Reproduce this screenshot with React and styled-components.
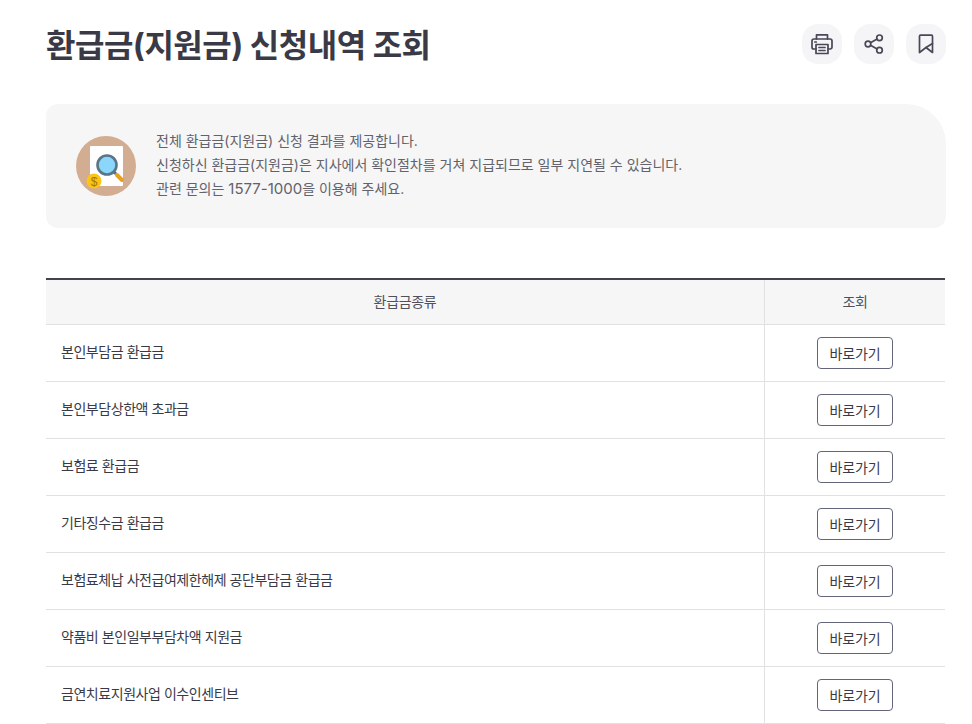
import React from 'react';
import styled, { createGlobalStyle } from 'styled-components';

const Global = createGlobalStyle`
  html, body { margin: 0; padding: 0; background: #fff; height: 724px; overflow: hidden; }
  body { font-family: Inter, "Noto Sans CJK KR", "Noto Sans", sans-serif; color: #33333d; }
`;
const Page = styled.main`
  padding: 0 26px 0 46px;
  width: 900px;
`;
const Header = styled.header`
  display: flex;
  justify-content: space-between;
  align-items: center;
  height: 88px;
  margin-bottom: 16px;
`;
const Title = styled.h1`
  margin: 0;
  padding-top: 4px;
  font-size: 32px;
  font-weight: 700;
  letter-spacing: -0.5px;
  line-height: 48px;
  color: #3a3a47;
`;
const Tools = styled.div`
  display: flex;
  gap: 12px;
`;
const ToolButton = styled.button`
  width: 40px;
  height: 40px;
  padding: 0;
  border: 0;
  border-radius: 16px;
  background: #f5f5f7;
  display: flex;
  align-items: center;
  justify-content: center;
  svg { display: block; }
`;
const Notice = styled.section`
  display: flex;
  align-items: center;
  gap: 20px;
  height: 124px;
  box-sizing: border-box;
  padding: 0 30px;
  background: #f6f6f6;
  border-radius: 12px 40px 12px 12px;
  margin-bottom: 50px;
`;
const NoticeText = styled.div`
  padding-bottom: 2px;
  font-size: 14px;
  line-height: 24px;
  color: #62626c;
  p { margin: 0; }
`;
const Digits = styled.span`
  font-size: 15px;
`;
const Table = styled.div`
  width: 899px;
  border-top: 2px solid #43434f;
`;
const Row = styled.div`
  display: grid;
  grid-template-columns: 718px 181px;
  height: 57px;
  border-bottom: 1px solid #e1e1e3;
  box-sizing: border-box;
`;
const HeadRow = styled(Row)`
  height: 45px;
  background: #f6f6f6;
`;
const HeadCell = styled.div`
  display: flex;
  align-items: center;
  justify-content: center;
  padding-bottom: 2px;
  font-size: 14px;
  letter-spacing: -0.3px;
  color: #50505c;
  & + & { border-left: 1px solid #e1e1e3; }
`;
const NameCell = styled.div`
  display: flex;
  align-items: center;
  padding: 0 0 4px 15px;
  font-size: 14px;
  letter-spacing: -0.45px;
  color: #3a3a47;
`;
const ActionCell = styled.div`
  display: flex;
  align-items: center;
  justify-content: center;
  border-left: 1px solid #e1e1e3;
`;
const GoButton = styled.button`
  width: 76px;
  height: 32px;
  padding: 0 0 1px;
  background: #fff;
  border: 1px solid #63657a;
  border-radius: 4px;
  font-family: inherit;
  font-size: 14px;
  letter-spacing: -0.1px;
  color: #3a3a47;
`;

const rows = [
  '본인부담금 환급금',
  '본인부담상한액 초과금',
  '보험료 환급금',
  '기타징수금 환급금',
  '보험료체납 사전급여제한해제 공단부담금 환급금',
  '약품비 본인일부부담차액 지원금',
  '금연치료지원사업 이수인센티브',
];

const stroke = { fill: 'none', stroke: '#484857', strokeWidth: 1.7, strokeLinejoin: 'round', strokeLinecap: 'round' };

const NoticeIcon = () => (
  <svg width="60" height="60" viewBox="0 0 60 60" aria-hidden="true">
    <circle cx="30" cy="30" r="30" fill="#d3ad91" />
    <rect x="14" y="10" width="33" height="40" rx="1" fill="#fff" />
    <path d="M37 35l3 3" stroke="#566f82" strokeWidth="3" />
    <path d="M41 39l5 5" stroke="#e8a021" strokeWidth="4" strokeLinecap="round" />
    <circle cx="31" cy="29" r="9.500" fill="#8bd6fb" stroke="#5a7488" strokeWidth="2.600" />
    <circle cx="18" cy="45" r="7.500" fill="#fdc513" />
    <text x="18" y="49.500" textAnchor="middle" fontSize="12" fill="#a9720c" fontFamily="Liberation Sans, sans-serif">$</text>
  </svg>
);

export default function App() {
  return (
    <Page>
      <Global />
      <Header>
        <Title>환급금(지원금) 신청내역 조회</Title>
        <Tools>
          <ToolButton aria-label="인쇄">
            <svg width="24" height="24" viewBox="0 0 24 24" {...stroke}>
              <path d="M6.500 7V2.800h11V7" />
              <path d="M6 17H3.800A1.800 1.800 0 0 1 2 15.200V9a2 2 0 0 1 2-2h16a2 2 0 0 1 2 2v6.200a1.800 1.800 0 0 1-1.800 1.800H18" />
              <path d="M6 12.500h12v9H6z" />
              <path d="M9 15.500h6M9 18.500h6M4.800 10h1.500" />
            </svg>
          </ToolButton>
          <ToolButton aria-label="공유">
            <svg width="24" height="24" viewBox="0 0 24 24" {...stroke}>
              <circle cx="17.500" cy="5.800" r="2.800" />
              <circle cx="17.500" cy="18.200" r="2.800" />
              <circle cx="6" cy="12" r="2.800" />
              <path d="M8.500 10.700l6.600-3.600M8.500 13.300l6.600 3.600" />
            </svg>
          </ToolButton>
          <ToolButton aria-label="즐겨찾기">
            <svg width="24" height="24" viewBox="0 0 24 24" {...stroke}>
              <path d="M5.500 4.200a1 1 0 0 1 1-1h11a1 1 0 0 1 1 1V20.500L12 15.500l-6.500 5z" />
              <path d="M12 15.500l6.500-4" />
            </svg>
          </ToolButton>
        </Tools>
      </Header>
      <Notice>
        <NoticeIcon />
        <NoticeText>
          <p>전체 환급금(지원금) 신청 결과를 제공합니다.</p>
          <p>신청하신 환급금(지원금)은 지사에서 확인절차를 거쳐 지급되므로 일부 지연될 수 있습니다.</p>
          <p>관련 문의는 <Digits>1577-1000</Digits>을 이용해 주세요.</p>
        </NoticeText>
      </Notice>
      <Table>
        <HeadRow>
          <HeadCell>환급금종류</HeadCell>
          <HeadCell>조회</HeadCell>
        </HeadRow>
        {rows.map((r) => (
          <Row key={r}>
            <NameCell>{r}</NameCell>
            <ActionCell><GoButton>바로가기</GoButton></ActionCell>
          </Row>
        ))}
      </Table>
    </Page>
  );
}
